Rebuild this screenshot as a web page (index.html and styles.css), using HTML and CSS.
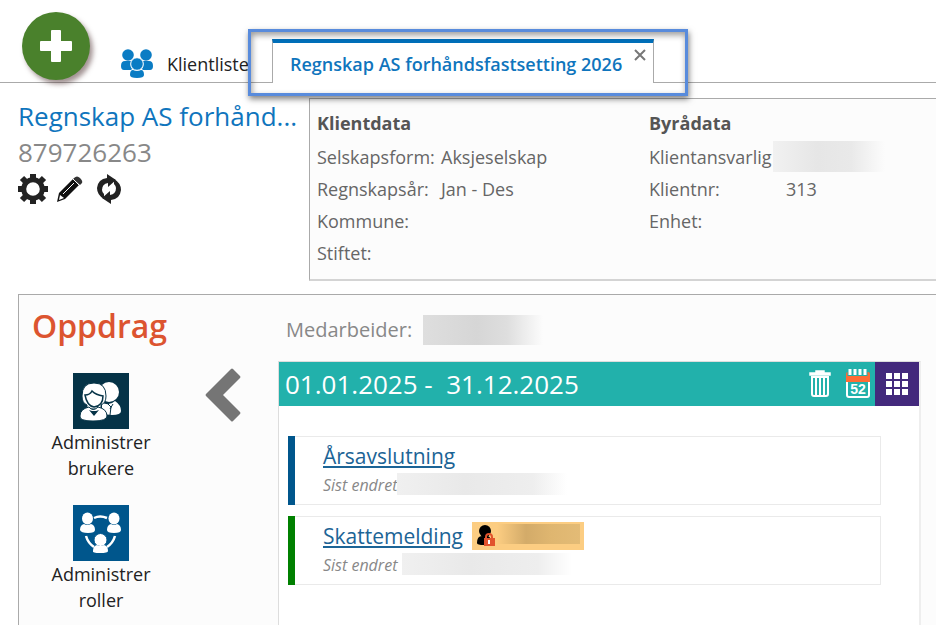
FILE: index.html
```html
<!DOCTYPE html>
<html lang="no">
<head>
    <meta charset="UTF-8">
    <meta name="viewport" content="width=device-width, initial-scale=1.0">
    <title>Regnskap AS forhåndsfastsetting 2026</title>
    <link rel="stylesheet" href="styles.css">
</head>
<body>

    <header class="topbar">
        <button class="add-button" aria-label="Legg til">
            <svg width="32" height="32" viewBox="0 0 32 32"><path d="M12 0h8q1 0 1 1v10h10q1 0 1 1v8q0 1-1 1H21v10q0 1-1 1h-8q-1 0-1-1V21H1q-1 0-1-1v-8q0-1 1-1h10V1q0-1 1-1z" fill="#fff"/></svg>
        </button>
        <a href="#" class="client-list">
            <svg width="32" height="30" viewBox="0 0 32 30" fill="#0a7cc4">
                <circle cx="7" cy="6" r="5.8"/><circle cx="25" cy="6" r="5.8"/>
                <path d="M0 17q0-5 4-5h6q-1 5 1 8l-1 1H3q-3 0-3-4z"/>
                <path d="M32 17q0-5-4-5h-6q1 5-1 8l1 1h7q3 0 3-4z"/>
                <circle cx="16" cy="15" r="6.3" stroke="#fff"/>
                <path d="M9 26q0-5 3-5 4 2 8 0 3 0 3 5 0 3-7 3t-7-3z"/>
            </svg>
            <span>Klientliste</span>
        </a>
        <div class="tab">
            <a href="#">Regnskap AS forhåndsfastsetting 2026</a>
            <button class="close" aria-label="Lukk">
                <svg width="12" height="12" viewBox="0 0 12 12"><path d="M1 1l10 10M11 1L1 11" stroke="#777" stroke-width="2"/></svg>
            </button>
            <div class="highlight"></div>
        </div>
    </header>

    <section class="client">
        <div class="client-name">
            <h1 title="Regnskap AS forhåndsfastsetting 2026">Regnskap AS forhånd...</h1>
            <p>879726263</p>
            <div class="tools">
                <button aria-label="Innstillinger">
                    <svg width="30" height="30" viewBox="0 0 30 30">
                        <circle cx="15" cy="15" r="9.3" fill="none" stroke="#222" stroke-width="5"/>
                        <path d="M15 0v6M15 24v6M0 15h6M24 15h6M4 4l4 4M22 22l4 4M4 26l4-4M22 8l4-4" stroke="#222" stroke-width="6"/>
                    </svg>
                </button>
                <button aria-label="Rediger">
                    <svg width="28" height="28" viewBox="0 0 28 28">
                        <path d="M1 27l2-9L17 4l6 6L9 24z" fill="#111"/>
                        <path d="M18 3q3-3 6 0t2 5l-2 2-7-6z" fill="#333"/>
                        <path d="M17 4l6 6M7 19L18 8" stroke="#fff" stroke-width="1"/>
                        <path d="M3 25l1-5 4 3z" fill="#fff"/>
                    </svg>
                </button>
                <button aria-label="Oppdater" class="refresh">
                    <svg width="24" height="30" viewBox="0 0 24 30">
                        <g id="arrow" fill="#222">
                            <path d="M7 25Q0 21 0 14 1 5 10 4V0l9 6-8 7V9q-6 1-6 7 0 2 2 4z"/>
                        </g>
                        <use href="#arrow" transform="rotate(180 12 15)"/>
                    </svg>
                </button>
            </div>
        </div>
        <div class="client-info">
            <div class="info-group">
                <h2>Klientdata</h2>
                <dl class="info-list">
                    <dt>Selskapsform:</dt><dd>Aksjeselskap</dd>
                    <dt>Regnskapsår:</dt><dd>Jan - Des</dd>
                    <dt>Kommune:</dt><dd></dd>
                    <dt>Stiftet:</dt><dd></dd>
                </dl>
            </div>
            <div class="info-group">
                <h2>Byrådata</h2>
                <dl class="info-list">
                    <dt>Klientansvarlig</dt><dd><span class="hidden-text owner"></span></dd>
                    <dt>Klientnr:</dt><dd class="number">313</dd>
                    <dt>Enhet:</dt><dd></dd>
                </dl>
            </div>
        </div>
    </section>

    <main class="panel">
        <aside class="side">
            <h2>Oppdrag</h2>
            <div class="side-row">
                <nav class="side-menu">
                    <a href="#">
                        <svg width="56" height="56" viewBox="0 0 56 56" fill="#fff">
                            <rect width="56" height="56" fill="#053347"/>
                            <ellipse cx="36" cy="19" rx="10" ry="10"/>
                            <path d="M29 41V30q8 3 13-2 6 4 6 10 0 4-9 4z"/>
                            <path d="M35 31l3 3-1 8M40 31l-3 5" fill="none" stroke="#053347"/>
                            <path d="M9 23Q9 10 21 10t12 13q0 7-5 9v4H14v-4q-5-2-5-9z" stroke="#053347"/>
                            <path d="M12 22q5 0 7-4 4 4 11 5 0 10-9 11-7-1-9-12z" stroke="#053347" stroke-width="1.500"/>
                            <path d="M7 43q0-7 9-9 4 5 9 0 9 2 9 9 0 5-14 5T7 43z" stroke="#053347"/>
                            <path d="M16 37l5 6 5-6-3 1h-4z" fill="#053347"/>
                        </svg>
                        <span>Administrer brukere</span>
                    </a>
                    <a href="#">
                        <svg width="56" height="56" viewBox="0 0 56 56" fill="#fff">
                            <rect width="56" height="56" fill="#00568c"/>
                            <ellipse cx="14.500" cy="13.500" rx="5.500" ry="6"/><ellipse cx="41" cy="13.500" rx="5.500" ry="6"/>
                            <path d="M7 25q0-5 4-6 3 2 7 0 4 1 4 6 0 3-7 3t-8-3zM34 25q0-5 4-6 3 2 6 0 4 1 4 6 0 3-7 3t-7-3z"/>
                            <path d="M21 13q6-3 13 0M13 31q2 7 8 11M42 31q-2 7-8 11" fill="none" stroke="#fff" stroke-width="2.500"/>
                            <circle cx="27.500" cy="35" r="6.500" stroke="#00568c"/>
                            <path d="M20 46q0-5 4-6 3 2 7 0 4 1 4 6 0 2-8 2t-7-2z"/>
                        </svg>
                        <span>Administrer roller</span>
                    </a>
                </nav>
                <button class="collapse" aria-label="Skjul meny">
                    <svg width="36" height="54" viewBox="0 0 36 54"><path d="M26 1q1-1 2 0l7 7q1 1 0 2L18 27l17 17q1 1 0 2l-7 7q-1 1-2 0L1 28q-1-1 0-2z" fill="#757575"/></svg>
                </button>
            </div>
        </aside>

        <div class="content">
            <p class="employee">Medarbeider: <span class="hidden-text employee-name"></span></p>
            <section class="period">
                <header class="period-bar">
                    <h3>01.01.2025 -&nbsp; 31.12.2025</h3>
                    <button aria-label="Slett">
                        <svg width="22" height="28" viewBox="0 0 22 28" fill="none" stroke="#fff">
                            <path d="M7 3V1h8v2M1 5V3h20v2z" stroke-width="1.500" fill="#fff"/>
                            <path d="M3 7v17q0 2 2 2h12q2 0 2-2V7z" stroke-width="2"/>
                            <path d="M7 7v18M11 7v18M15 7v18" stroke-width="2"/>
                        </svg>
                    </button>
                    <button aria-label="Kalender">
                        <svg width="26" height="30" viewBox="0 0 26 30">
                            <path d="M2 12v14q0 2 2 2h18q2 0 2-2V12" fill="none" stroke="#fff" stroke-width="2"/>
                            <path d="M1 5q0-2 2-2h20q2 0 2 2v8H1z" fill="#ff6b35"/>
                            <path d="M5 0v7M10 0v7M15 0v7M20 0v7" stroke="#22b1ab" stroke-width="5"/>
                            <path d="M5 0v6M10 0v6M15 0v6M20 0v6" stroke="#fff" stroke-width="3"/>
                            <text x="13" y="25" class="week">52</text>
                        </svg>
                    </button>
                    <button class="grid-button" aria-label="Vis alle">
                        <svg width="22" height="22" viewBox="0 0 22 22" fill="#fff">
                            <path d="M0 0h6v6H0zM8 0h6v6H8zM16 0h6v6h-6zM0 8h6v6H0zM8 8h6v6H8zM16 8h6v6h-6zM0 16h6v6H0zM8 16h6v6H8zM16 16h6v6h-6z"/>
                        </svg>
                    </button>
                </header>
                <div class="tasks">
                    <article class="task">
                        <div class="task-body">
                            <div class="task-title"><a href="#">Årsavslutning</a></div>
                            <p>Sist endret<span class="hidden-text changed"></span></p>
                        </div>
                    </article>
                    <article class="task green">
                        <div class="task-body">
                            <div class="task-title">
                                <a href="#">Skattemelding</a>
                                <span class="badge">
                                    <svg width="18" height="22" viewBox="0 0 18 22">
                                        <circle cx="8" cy="6" r="6"/><path d="M0 18q0-7 5-7h6q4 2 3 8l-7 1q-7 0-7-2z"/>
                                        <path d="M9 14v-2q0-3 3-3t3 3v2" fill="none" stroke="#e2532d" stroke-width="2"/>
                                        <rect x="7" y="13" width="11" height="8" fill="#e2532d"/>
                                        <path d="M12 15v4" stroke="#fff" stroke-width="2"/>
                                    </svg>
                                    <span class="badge-text"></span>
                                </span>
                            </div>
                            <p>Sist endret <span class="hidden-text changed"></span></p>
                        </div>
                    </article>
                </div>
            </section>
        </div>
    </main>

</body>
</html>
```
FILE: styles.css
```css
* {
    box-sizing: border-box;
}
body {
    font-family: "Open Sans", "Noto Sans", sans-serif;
    margin: 0;
    min-height: 100vh;
    padding-bottom: 2px;
    display: flex;
    flex-direction: column;
    background: #fff;
    color: #222;
    overflow-x: hidden;
}
h1, h2, h3, p, dl, dd {
    margin: 0;
}
button {
    display: flex;
    padding: 0;
    border: none;
    background: none;
    cursor: pointer;
}
svg {
    display: block;
    flex: none;
}

/* Top bar */
.topbar {
    display: flex;
    align-items: flex-end;
    height: 83px;
    padding-left: 22px;
    border-bottom: 1px solid #aaa;
}
.add-button {
    width: 68px;
    height: 68px;
    margin-bottom: 2px;
    border-radius: 50%;
    background: #4a812c;
    box-shadow: 3px 4px 5px rgba(70, 40, 40, 0.5);
    align-items: center;
    justify-content: center;
    flex: none;
}
.client-list {
    display: flex;
    align-items: center;
    gap: 14px;
    width: 127px;
    margin: 0 24px 3px 31px;
    color: #222;
    font-size: 18px;
    line-height: 30px;
    text-decoration: none;
    white-space: nowrap;
}
.tab {
    position: relative;
    display: flex;
    align-items: flex-start;
    height: 44px;
    margin-bottom: -1px;
    padding: 0 7px 0 17px;
    border: 1px solid #aaa;
    border-top: 4px solid #006fb9;
    border-bottom: none;
    background: #fff;
    white-space: nowrap;
}
.tab a {
    color: #0f75bd;
    font-size: 18px;
    font-weight: 600;
    line-height: 42px;
    text-decoration: none;
}
.close {
    margin: 6px 0 0 12px;
}
.highlight {
    position: absolute;
    inset: -14px -35px -13px -25px;
    border: 3px solid #588bdc;
    box-shadow: 1px 3px 6px rgba(0, 0, 0, 0.5), inset 1px 3px 6px rgba(0, 0, 0, 0.4);
    pointer-events: none;
}

/* Client */
.client {
    display: flex;
    margin-top: 15px;
    padding-left: 18px;
}
.client-name {
    width: 291px;
    flex: none;
}
.client-name h1 {
    color: #0f75bd;
    font-size: 26px;
    font-weight: 400;
    line-height: 36px;
    white-space: nowrap;
}
.client-name p {
    color: #888;
    font-size: 26px;
    line-height: 36px;
}
.tools {
    display: flex;
    align-items: center;
    gap: 8px;
    margin-top: 4px;
}
.refresh {
    margin-left: 5px;
}
.client-info {
    display: flex;
    flex: 1;
    min-height: 183px;
    padding: 8px 0 0 7px;
    border: 1px solid #aaa;
    border-right: none;
    border-bottom: 2px solid #d4d4d4;
    background: #fcfcfc;
}
.info-group {
    width: 332px;
    flex: none;
    color: #666;
    font-size: 18px;
    line-height: 32px;
    white-space: nowrap;
}
.info-group h2 {
    margin-bottom: 2px;
    color: #555;
    font-size: 18px;
    font-weight: 700;
}
.info-list {
    display: grid;
    grid-template-columns: 124px 1fr;
    grid-auto-rows: 32px;
}
.number {
    padding-left: 13px;
}
.hidden-text {
    display: inline-block;
    vertical-align: top;
    background: linear-gradient(90deg, #f1f1f1, #e6e6e6 40%, #e9e9e9 70%, #fcfcfc);
}
.owner {
    width: 112px;
    height: 31px;
}

/* Panel */
.panel {
    display: flex;
    flex: 1;
    margin: 13px 0 0 18px;
    border: 1px solid #aaa;
    border-width: 1px 0 0 1px;
    background: #fcfcfc;
}
.side {
    width: 259px;
    flex: none;
}
.side h2 {
    padding: 8px 0 0 13px;
    color: #dc5430;
    font-size: 32px;
    font-weight: 600;
    line-height: 46px;
}
.side-row {
    display: flex;
    align-items: flex-start;
    margin-top: 24px;
}
.side-menu {
    display: flex;
    flex-direction: column;
    gap: 24px;
    width: 120px;
    margin-left: 22px;
}
.side-menu a {
    display: flex;
    flex-direction: column;
    align-items: center;
    color: #222;
    font-size: 18px;
    line-height: 26px;
    text-align: center;
    text-decoration: none;
}
.collapse {
    margin: -5px 0 0 44px;
}
.content {
    flex: 1;
    display: flex;
    flex-direction: column;
    padding-right: 15px;
}
.employee {
    padding: 20px 0 0 8px;
    height: 66px;
    color: #888;
    font-size: 20px;
    line-height: 30px;
}
.employee-name {
    width: 120px;
    height: 30px;
    margin-left: 6px;
    background: linear-gradient(90deg, #dedede, #d6d6d6 45%, #dedede 70%, #fcfcfc);
}
.period {
    flex: 1;
    border: 1px solid #ddd;
    border-right: 2px solid #eee;
    border-bottom: none;
    background: #fff;
}
.period-bar {
    display: flex;
    align-items: center;
    gap: 14px;
    height: 44px;
    padding-left: 6px;
    background: #22b1ab;
    color: #fff;
}
.period-bar h3 {
    flex: 1;
    font-size: 26px;
    font-weight: 400;
}
.week {
    fill: #fff;
    font-size: 14px;
    font-weight: 700;
    text-anchor: middle;
}
.period-bar .grid-button {
    width: 44px;
    height: 44px;
    margin-left: -10px;
    background: #43297c;
    align-items: center;
    justify-content: center;
}
.tasks {
    display: flex;
    flex-direction: column;
    gap: 11px;
    padding: 30px 38px 0 9px;
}
.task {
    border-left: 7px solid #00568c;
}
.task.green {
    border-left-color: #008000;
}
.task-body {
    height: 69px;
    padding: 4px 0 0 28px;
    border: 1px solid #eaeaea;
    border-left: none;
}
.task-title {
    display: flex;
    align-items: center;
    gap: 9px;
    height: 30px;
}
.task a {
    color: #1c6496;
    font-size: 21px;
    text-decoration-thickness: 2px;
    text-underline-offset: 2px;
}
.task p {
    color: #888;
    font-size: 16px;
    font-style: italic;
    line-height: 28px;
}
.changed {
    width: 170px;
    height: 22px;
    margin-top: 2px;
    background: linear-gradient(90deg, #f0f0f0, #e9e9e9 40%, #eee 80%, #fff);
}
.badge {
    display: flex;
    align-items: center;
    gap: 2px;
    width: 112px;
    height: 28px;
    padding-left: 5px;
    background: #fccd82;
}
.badge-text {
    flex: 1;
    height: 20px;
    margin: 0 4px 4px 0;
    background: linear-gradient(90deg, #fccd82, #d3ab69 35%, #dfb670 65%, #e3bb76);
}
```
